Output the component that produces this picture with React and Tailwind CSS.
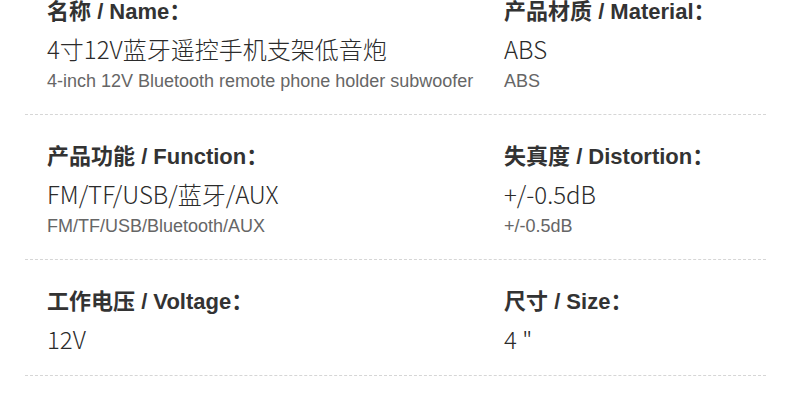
import React from "react";

const rows = [
  [
    {
      cn: "名称",
      en: "Name",
      value: "4寸12V蓝牙遥控手机支架低音炮",
      sub: "4-inch 12V Bluetooth remote phone holder subwoofer",
    },
    { cn: "产品材质", en: "Material", value: "ABS", sub: "ABS" },
  ],
  [
    {
      cn: "产品功能",
      en: "Function",
      value: "FM/TF/USB/蓝牙/AUX",
      sub: "FM/TF/USB/Bluetooth/AUX",
    },
    { cn: "失真度", en: "Distortion", value: "+/-0.5dB", sub: "+/-0.5dB" },
  ],
  [
    { cn: "工作电压", en: "Voltage", value: "12V" },
    { cn: "尺寸", en: "Size", value: '4 "' },
  ],
];

function Cell({ item }) {
  return (
    <div className="pl-[22px] pt-[25px] pb-[16px]">
      <h3 className="text-[22px] leading-[34px] font-bold text-[#333] whitespace-nowrap [font-family:'Liberation_Sans','Noto_Sans_CJK_SC',sans-serif]">
        {item.cn} / {item.en}：
      </h3>
      <p className="text-[24px] leading-[40px] font-light text-[#2b2b2b] whitespace-nowrap [font-family:'Noto_Sans_CJK_SC',sans-serif]">
        {item.value}
      </p>
      {item.sub && (
        <p className="text-[18px] leading-[24px] mb-[5px] text-[#666] whitespace-nowrap [font-family:'Liberation_Sans',sans-serif]">
          {item.sub}
        </p>
      )}
    </div>
  );
}

export default function App() {
  return (
    <div className="w-[790px] h-[419px] bg-white overflow-hidden">
      <div className="mx-[25px] -mt-[30px] w-[741px]">
        {rows.map((row, i) => (
          <div
            key={i}
            className="grid grid-cols-[457px_1fr] border-b border-dashed border-[#d6d6d6]"
          >
            {row.map((item) => (
              <Cell key={item.en} item={item} />
            ))}
          </div>
        ))}
      </div>
    </div>
  );
}
